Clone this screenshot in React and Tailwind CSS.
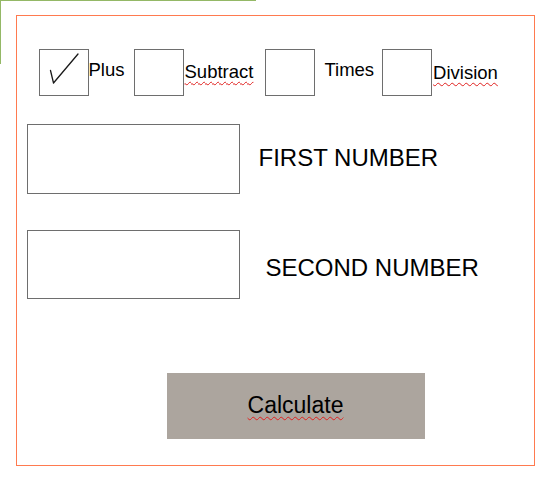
import React from 'react';

function Box({ checked, className = '' }) {
  return (
    <div className={`w-[50px] h-[47px] shrink-0 border border-[#6e6e6e] bg-white ${className}`}>
      {checked && (
        <svg width="48" height="45" viewBox="0 0 48 45" fill="none">
          <path d="M10.5 20.5 L13.5 33 L38 4" stroke="#1a1a1a" strokeWidth="1.3" strokeLinejoin="round" strokeLinecap="round" />
        </svg>
      )}
    </div>
  );
}

const squiggle = 'underline decoration-wavy decoration-[#e0201e] decoration-1 underline-offset-[3px]';

export default function App() {
  return (
    <div className="relative w-[553px] h-[480px] bg-white text-black" style={{ fontFamily: '"Liberation Sans", Arial, sans-serif' }}>
      {/* green frame behind */}
      <div className="absolute left-0 top-0 w-[256px] h-[64px] border-t-[1.5px] border-l-[1.5px] border-[#94b866]" />

      <div className="relative ml-[15.5px] pt-[14.5px]">
        <div className="w-[519px] h-[451px] border-[1.5px] border-[#ff7a4f] flex flex-col">
          {/* operations */}
          <div className="flex items-center mt-[33px] text-[18.5px] leading-none">
            <Box checked className="ml-[22px]" />
            <span className="ml-0 -mt-[4px]">Plus</span>
            <Box className="ml-[9px]" />
            <span className={`ml-[1px] ${squiggle}`}>Subtract</span>
            <Box className="ml-[12px]" />
            <span className="ml-[9px] -mt-[4px]">Times</span>
            <Box className="ml-[8px]" />
            <span className={`ml-[1px] mt-[2px] ${squiggle}`}>Division</span>
          </div>

          {/* first number */}
          <div className="flex items-center mt-[28px] ml-[10px]">
            <div className="w-[213px] h-[70px] border border-[#6e6e6e]" />
            <span className="ml-[19px] -mt-[2px] text-[24px] leading-none">FIRST NUMBER</span>
          </div>

          {/* second number */}
          <div className="flex items-center mt-[36px] ml-[10px]">
            <div className="w-[213px] h-[69px] border border-[#6e6e6e]" />
            <span className="ml-[26px] mt-[8px] text-[24px] leading-none">SECOND NUMBER</span>
          </div>

          {/* calculate */}
          <div className="mt-[74px] ml-[150px]">
            <button className="w-[258px] h-[66px] bg-[#aca59e] flex items-center justify-center">
              <span className={`text-[23px] leading-none ${squiggle}`}>Calculate</span>
            </button>
          </div>
        </div>
      </div>
    </div>
  );
}
